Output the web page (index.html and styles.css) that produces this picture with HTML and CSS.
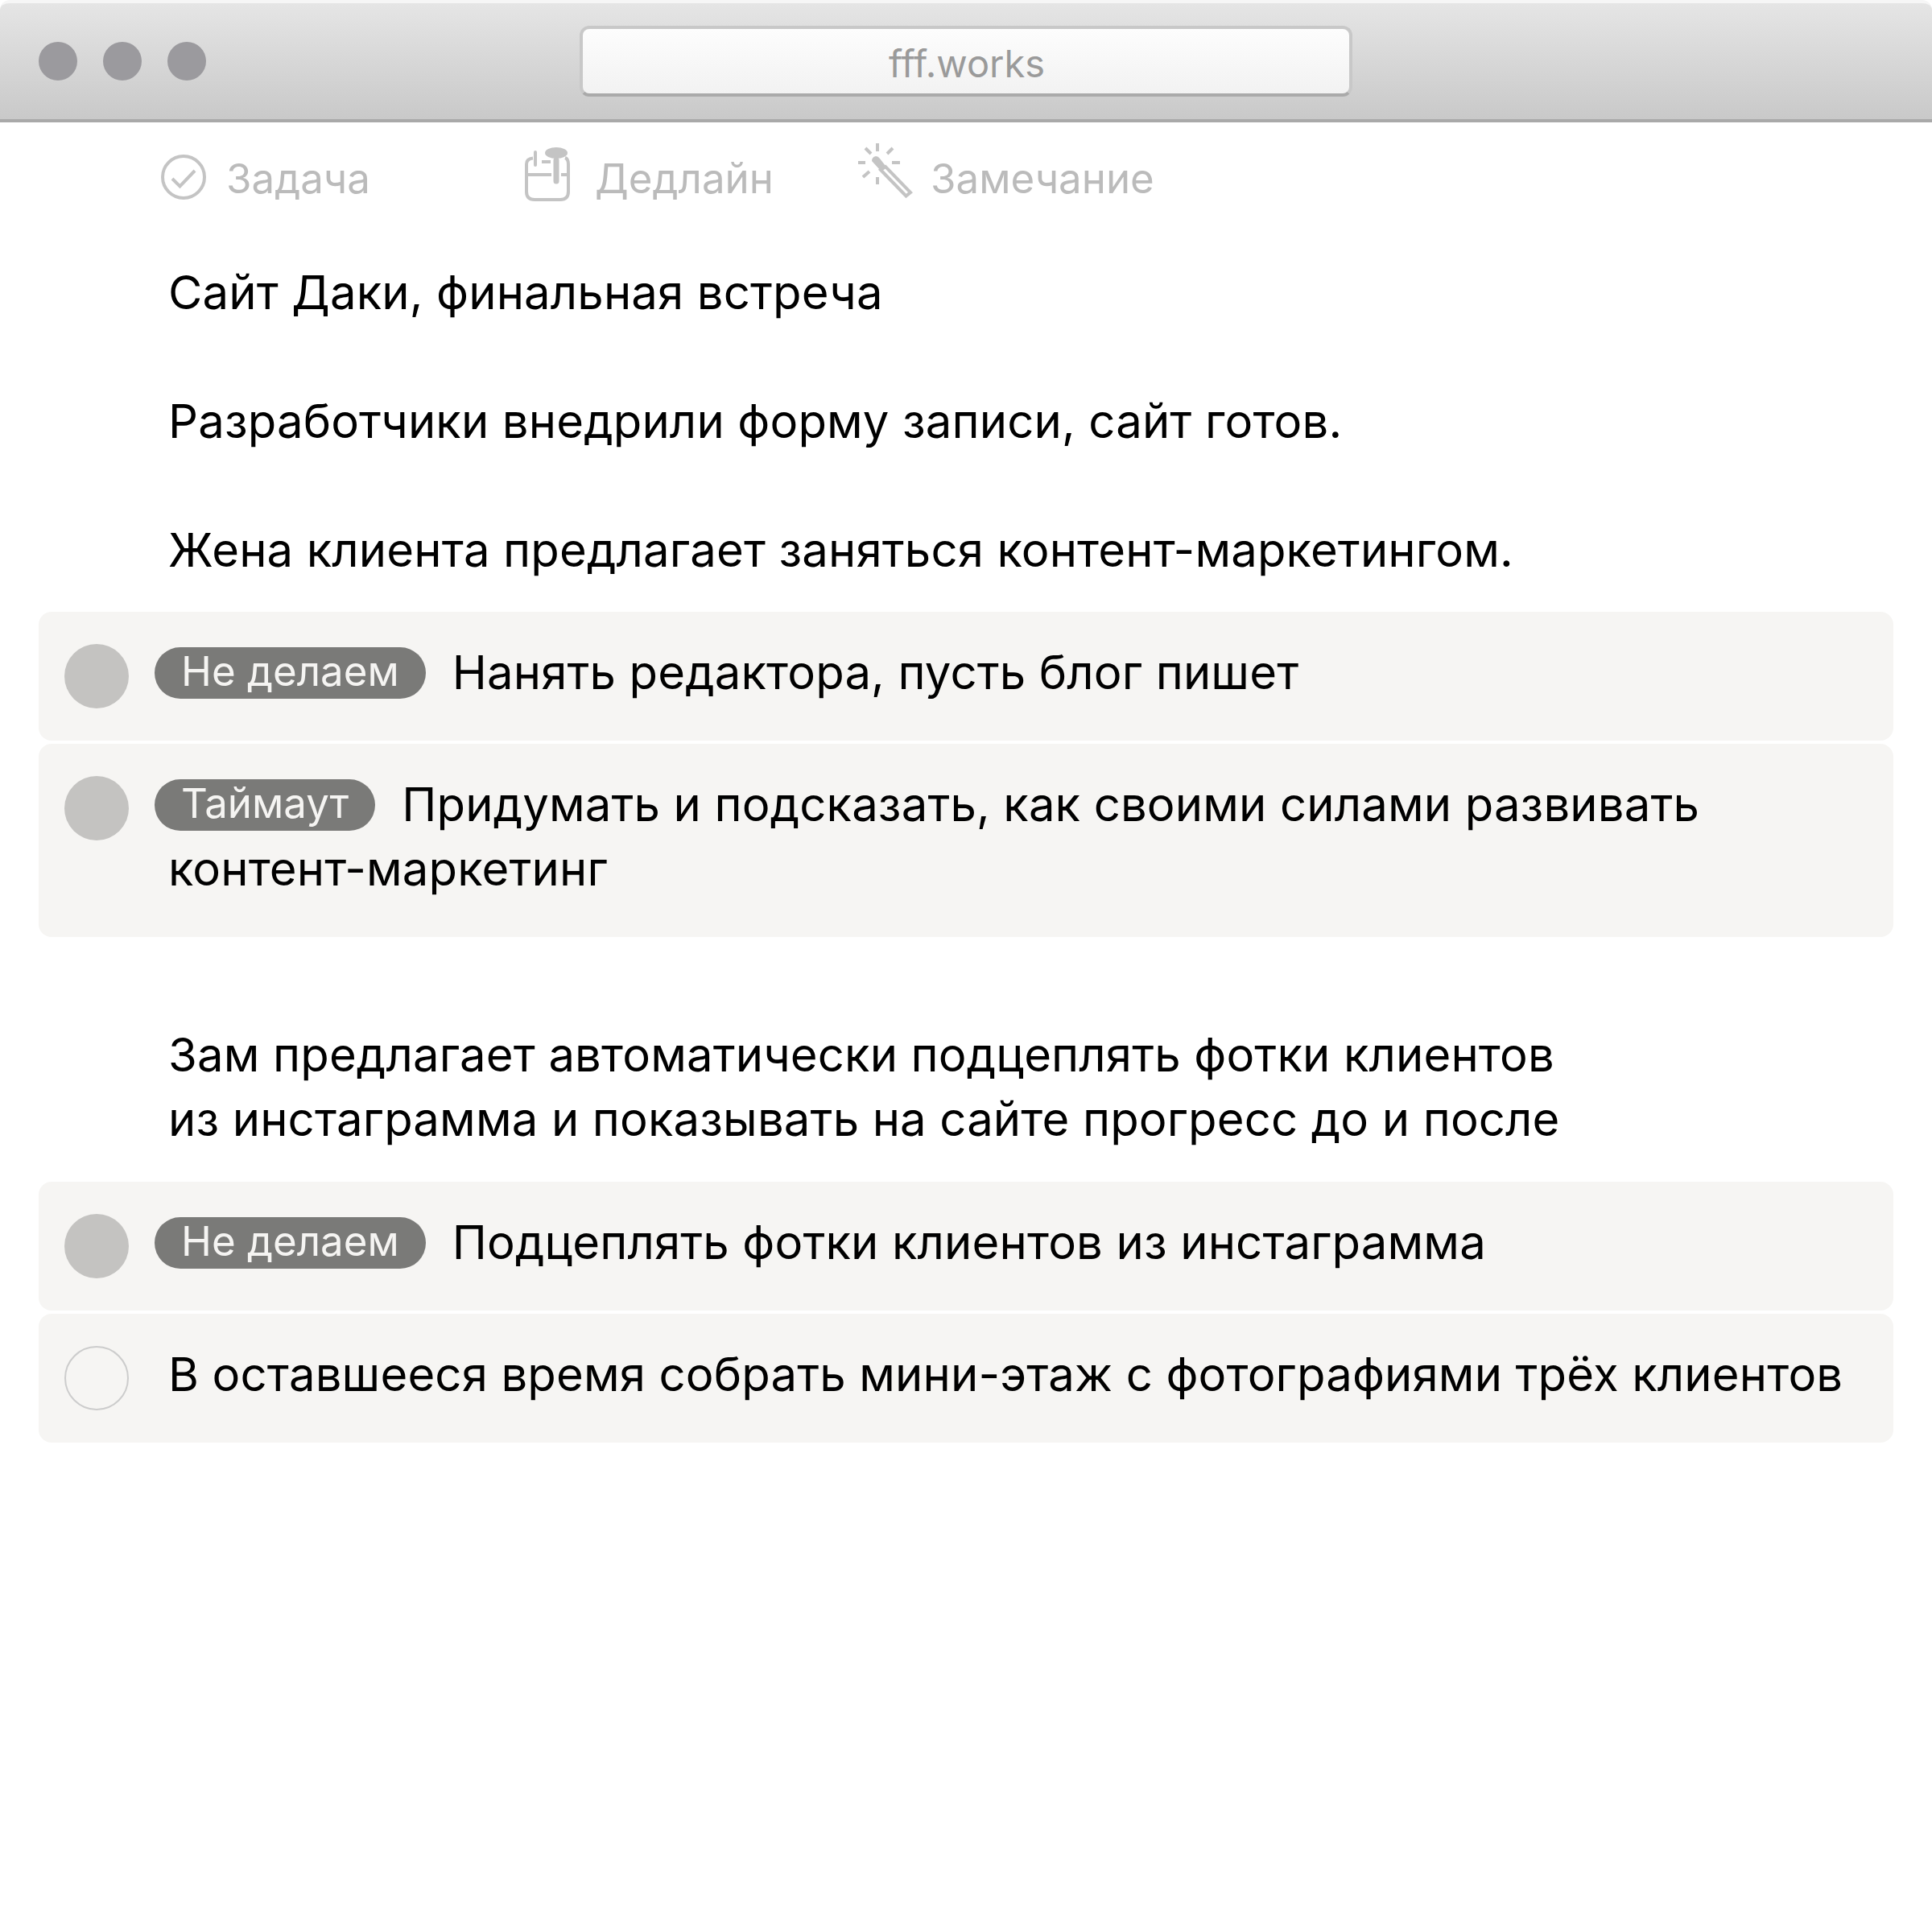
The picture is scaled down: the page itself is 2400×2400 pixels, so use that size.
FILE: index.html
```html
<!DOCTYPE html>
<html lang="ru">
<head>
<meta charset="utf-8">
<title>fff.works</title>
<link rel="stylesheet" href="styles.css">
</head>
<body>
<div class="window">
  <header class="titlebar">
    <div class="dots"><span class="dot"></span><span class="dot"></span><span class="dot"></span></div>
    <div class="urlbar">fff.works</div>
  </header>
  <nav class="toolbar">
    <div class="tool tool-task">
      <svg class="icon icon-task" viewBox="0 0 56 56"><circle cx="28" cy="28" r="26" fill="none" stroke="#c4c4c4" stroke-width="4"/><path d="M14 30l9.500 9.500L42 20" fill="none" stroke="#c4c4c4" stroke-width="4"/></svg>
      <span>Задача</span>
    </div>
    <div class="tool tool-deadline">
      <svg class="icon icon-deadline" viewBox="0 0 56 70"><path d="M10 14.500C4 15 2 18 2 22V56Q2 66 12 66H44Q54 66 54 56V22C54 18 53 15 50 14" fill="none" stroke="#c4c4c4" stroke-width="4"/><path d="M2 35H33M45 35H54" fill="none" stroke="#c4c4c4" stroke-width="4"/><path d="M13 7V23" fill="none" stroke="#c4c4c4" stroke-width="4" stroke-linecap="round"/><path d="M21 19H32" fill="none" stroke="#c4c4c4" stroke-width="4"/><ellipse cx="39" cy="8" rx="14" ry="7" fill="#c4c4c4"/><path d="M39 17V43" fill="none" stroke="#c4c4c4" stroke-width="7" stroke-linecap="round"/></svg>
      <span>Дедлайн</span>
    </div>
    <div class="tool tool-note">
      <svg class="icon icon-note" viewBox="0 0 70 72"><path d="M24 0V10M24 42V51M0 24H9M42 24H52M9 6L16 13M43 6L36 13M6 42L14 35" fill="none" stroke="#c4c4c4" stroke-width="4"/><path d="M17 22Q17 17 22 16Q25 16 27 19L34 28L27 33Z" fill="#c4c4c4"/><path d="M28 33L34 29L65 61L59.500 65.500Z" fill="none" stroke="#c4c4c4" stroke-width="4"/></svg>
      <span>Замечание</span>
    </div>
  </nav>
  <main class="content">
    <p class="para first">Сайт Даки, финальная встреча</p>
    <p class="para gap">Разработчики внедрили форму записи, сайт готов.</p>
    <p class="para gap">Жена клиента предлагает заняться контент-маркетингом.</p>
    <section class="cards">
      <div class="card"><span class="mark done"></span><span class="pill">Не делаем</span>Нанять редактора, пусть блог пишет</div>
      <div class="card"><span class="mark done"></span><span class="pill">Таймаут</span>Придумать и подсказать, как своими силами развивать<br>контент-маркетинг</div>
    </section>
    <p class="para second">Зам предлагает автоматически подцеплять фотки клиентов<br>из инстаграмма и показывать на сайте прогресс до и после</p>
    <section class="cards">
      <div class="card"><span class="mark done"></span><span class="pill">Не делаем</span>Подцеплять фотки клиентов из инстаграмма</div>
      <div class="card"><span class="mark"></span>В оставшееся время собрать мини-этаж с фотографиями трёх клиентов</div>
    </section>
  </main>
</div>
</body>
</html>
```
FILE: styles.css
```css
* { box-sizing: border-box; }
html, body { margin: 0; padding: 0; background: #fff; }
body { font-family: Inter, "Noto Sans", sans-serif; color: #000; }
.window { width: 2400px; height: 2400px; background: #fff; }
.titlebar {
  height: 152px;
  display: flex;
  align-items: flex-start;
  border-top: 4px solid #f6f6f6;
  border-bottom: 4px solid #a9a9a9;
  border-radius: 12px 12px 0 0;
  background: linear-gradient(#e5e5e5, #c9c9c9);
  padding: 28px 0 0 48px;
}
.dots { display: flex; gap: 32px; padding-top: 20px; width: 672px; }
.dot { width: 48px; height: 48px; border-radius: 50%; background: #9b9a9e; }
.urlbar {
  width: 960px;
  height: 88px;
  padding-left: 2px;
  border: 4px solid #c8c8c8;
  border-bottom-color: #aaa;
  border-radius: 12px;
  background: linear-gradient(#fdfdfd, #f2f2f2);
  color: #9a9a9a;
  font-size: 47px;
  line-height: 86px;
  text-align: center;
}
.toolbar { height: 128px; display: flex; align-items: flex-start; padding-left: 200px; color: #bbb; font-size: 51px; line-height: 80px; }
.tool { display: flex; align-items: flex-start; padding-top: 30px; }
.tool-task { width: 452px; }
.tool-deadline { width: 414px; }
.icon { flex: none; display: block; }
.icon-task { width: 56px; height: 56px; margin: 10px 25px 0 0; }
.icon-deadline { width: 56px; height: 70px; margin: 0 31px 0 0; }
.icon-note { width: 70px; height: 72px; margin: -4px 20px 0 0; }
.content { padding: 43px 48px 0; font-size: 58px; line-height: 80px; letter-spacing: 0.15px; }
.para { margin: 0; padding-left: 161px; }
.gap { margin-top: 80px; }
.second { margin-top: 106px; }
.cards { display: flex; flex-direction: column; gap: 4px; margin-top: 37px; }
.second + .cards { margin-top: 38px; }
.card { position: relative; padding: 35px 32px 45px 161px; border-radius: 16px; background: #f6f5f3; }
.mark { position: absolute; left: 32px; top: 40px; width: 80px; height: 80px; border: 2px solid #ccc; border-radius: 50%; }
.mark.done { border: 0; background: #c4c3c1; }
.pill {
  display: inline-block;
  height: 64px;
  margin: 0 33px 0 -17px;
  padding: 0 33px;
  border-radius: 32px;
  background: #7a7a78;
  color: #f5f4f2;
  font-size: 51px;
  line-height: 60px;
  letter-spacing: 0;
  vertical-align: 4px;
}
```
